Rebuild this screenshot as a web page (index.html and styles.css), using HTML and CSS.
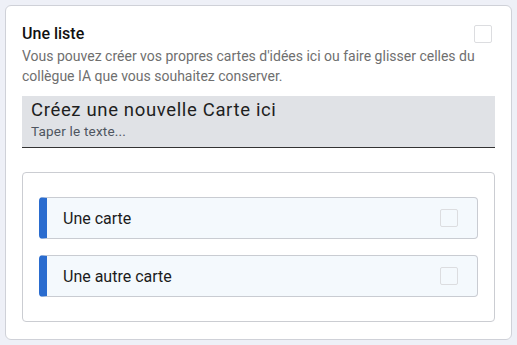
FILE: index.html
```html
<!DOCTYPE html>
<html lang="fr">
<head>
<meta charset="utf-8">
<link rel="stylesheet" href="styles.css">
</head>
<body>
<div class="panel">
  <div class="head">
    <div class="title">Une liste</div>
    <span class="check"></span>
  </div>
  <p class="desc">Vous pouvez créer vos propres cartes d'idées ici ou faire glisser celles du collègue IA que vous souhaitez conserver.</p>
  <div class="input">
    <div class="input-main">Créez une nouvelle Carte ici</div>
    <div class="input-sub">Taper le texte...</div>
  </div>
  <div class="list">
    <div class="card"><span class="card-text">Une carte</span><span class="check"></span></div>
    <div class="card"><span class="card-text">Une autre carte</span><span class="check"></span></div>
  </div>
</div>
</body>
</html>
```

FILE: styles.css
```css
html, body { margin: 0; padding: 0; }
body {
  background: #eef0f7;
  font-family: Roboto, "Noto Sans", sans-serif;
  padding: 5px 5px 0 5px;
}
.panel {
  background: #fff;
  border: 1px solid #cfd1d8;
  border-radius: 6px;
  padding: 18px 16px 15px 16px;
  height: 300px;
}
.head {
  display: flex;
  justify-content: space-between;
  align-items: flex-start;
}
.title {
  font-size: 16px;
  font-weight: 500;
  color: #111;
  line-height: 20px;
  margin-top: 0;
}
.check {
  width: 16px;
  height: 16px;
  border: 1px solid #dcdde0;
  border-radius: 2px;
  box-sizing: content-box;
  flex: none;
  margin-top: 1px;
  margin-right: 3px;
}
.desc {
  margin: 0;
  font-size: 14px;
  line-height: 20px;
  color: #6f6f6f;
  margin-top: 2px;
}
.input {
  margin-top: 10px;
  background: #e0e2e6;
  border-bottom: 1.5px solid #333;
  padding: 3px 9px 0 9px;
  box-sizing: border-box;
  height: 52px;
}
.input-main {
  font-size: 18.5px;
  letter-spacing: 0.65px;
  line-height: 23px;
  color: #1e1e1e;
}
.input-sub {
  font-size: 13.5px;
  letter-spacing: 0.2px;
  line-height: 18px;
  color: #4e5560;
}
.list {
  margin-top: 24px;
  border: 1px solid #cbcdd2;
  border-radius: 4px;
  padding: 24px 16px;
  display: flex;
  flex-direction: column;
  gap: 16px;
}
.card {
  display: flex;
  align-items: center;
  justify-content: space-between;
  height: 42px;
  box-sizing: border-box;
  background: #f4f9fd;
  border: 1px solid #c9ccd2;
  border-left: 8px solid #2a6ccf;
  border-radius: 4px;
  padding: 0 19px 0 16px;
}
.card-text {
  font-size: 16px;
  color: #1c1c1c;
}
.card .check {
  margin: 0;
}
```
